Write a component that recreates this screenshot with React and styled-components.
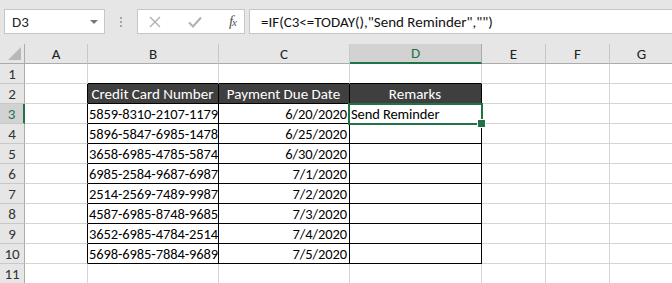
import { Fragment } from "react"
import styled, { createGlobalStyle } from "styled-components"

const GlobalStyle = createGlobalStyle`
	html, body {
		margin: 0;
		padding: 0;
		background: #ffffff;
		overflow: hidden;
	}
	* {
		box-sizing: border-box;
	}
`

const FONT = `Carlito, Lato, "Liberation Sans", sans-serif`
const GREEN = "#217346"
const GRID = "#d4d4d4"

const Window = styled.div`
	width: 672px;
	height: 283px;
	overflow: hidden;
	font-family: ${FONT};
	background: #ffffff;
`

const FormulaBar = styled.div`
	height: 44px;
	background: #e6e6e6;
	display: flex;
	align-items: flex-start;
	padding: 9px 0 0 4px;
`

const NameBox = styled.div`
	width: 101px;
	height: 25px;
	background: #ffffff;
	border: 1px solid #c6c6c6;
	display: flex;
	align-items: center;
	justify-content: space-between;
	padding: 0 6px 0 7px;
	font-size: 15px;
	color: #222;
`

const Caret = styled.span`
	width: 0;
	height: 0;
	border-left: 4px solid transparent;
	border-right: 4px solid transparent;
	border-top: 4px solid #777;
`

const Dots = styled.div`
	width: 32px;
	height: 25px;
	display: flex;
	flex-direction: column;
	align-items: center;
	justify-content: center;
	gap: 2px;
	span {
		width: 2px;
		height: 2px;
		background: #a6a6a6;
	}
`

const FxBox = styled.div`
	width: 108px;
	height: 25px;
	background: #ffffff;
	border: 1px solid #c6c6c6;
	display: flex;
	align-items: center;
	padding: 0 8px 0 11px;
	justify-content: space-between;
	color: #a0a0a0;
`

const Fx = styled.span`
	font-family: "Liberation Serif", serif;
	font-style: italic;
	font-size: 15px;
	color: #555;
	letter-spacing: -1px;
	span {
		font-size: 11px;
	}
`

const FormulaInput = styled.div`
	flex: 1;
	margin-left: 4px;
	height: 25px;
	background: #ffffff;
	border: 1px solid #c6c6c6;
	border-right: none;
	display: flex;
	align-items: center;
	padding-left: 11px;
	font-size: 15px;
	color: #111;
`

const Sheet = styled.div`
	display: grid;
	grid-template-columns: 25px 63px 131px 131px 132px 64px 64px 64px;
	grid-auto-rows: 20px;
`

const Corner = styled.div`
	background: #e6e6e6;
	border-right: 1px solid #ababab;
	border-bottom: 1px solid #ababab;
	position: relative;
	&::after {
		content: "";
		position: absolute;
		right: 3px;
		bottom: 3px;
		border-left: 13px solid transparent;
		border-bottom: 13px solid #b8b8b8;
	}
`

const ColHead = styled.div`
	background: ${(p) => (p.$active ? "#d2d2d2" : "#e6e6e6")};
	border-right: 1px solid ${(p) => (p.$active ? "#ababab" : "#c8c8c8")};
	border-bottom: ${(p) => (p.$active ? `2px solid ${GREEN}` : "1px solid #ababab")};
	color: ${(p) => (p.$active ? GREEN : "#222")};
	font-size: 15px;
	display: flex;
	align-items: center;
	justify-content: center;
`

const RowHead = styled.div`
	background: ${(p) => (p.$active ? "#d2d2d2" : "#e6e6e6")};
	border-right: ${(p) => (p.$active ? `2px solid ${GREEN}` : "1px solid #ababab")};
	border-bottom: 1px solid #c8c8c8;
	color: ${(p) => (p.$active ? GREEN : "#333")};
	font-size: 15px;
	display: flex;
	align-items: center;
	justify-content: center;
	padding-top: 1px;
`

const Cell = styled.div`
	position: relative;
	background: ${(p) => (p.$dark ? "#3f3f3f" : "#ffffff")};
	color: ${(p) => (p.$dark ? "#ffffff" : "#000000")};
	border-right: 1px solid ${(p) => p.$right};
	border-bottom: 1px solid ${(p) => p.$bottom};
	font-size: ${(p) => (p.$dark ? "15px" : "14.5px")};
	letter-spacing: ${(p) => (p.$dark ? "0" : "-0.1px")};
	display: flex;
	align-items: flex-end;
	justify-content: ${(p) => p.$align};
	padding: 0 2px 0 1px;
	white-space: nowrap;
`

const Selection = styled.div`
	position: absolute;
	z-index: 2;
	left: -2px;
	top: -1px;
	right: -2px;
	bottom: -2px;
	border: 2px solid ${GREEN};
	pointer-events: none;
	&::after {
		content: "";
		position: absolute;
		right: -5px;
		bottom: -5px;
		width: 7px;
		height: 7px;
		background: ${GREEN};
		border: 1px solid #ffffff;
	}
`

const columns = ["A", "B", "C", "D", "E", "F", "G"]

const data = [
	["5859-8310-2107-1179", "6/20/2020", "Send Reminder"],
	["5896-5847-6985-1478", "6/25/2020", ""],
	["3658-6985-4785-5874", "6/30/2020", ""],
	["6985-2584-9687-6987", "7/1/2020", ""],
	["2514-2569-7489-9987", "7/2/2020", ""],
	["4587-6985-8748-9685", "7/3/2020", ""],
	["3652-6985-4784-2514", "7/4/2020", ""],
	["5698-6985-7884-9689", "7/5/2020", ""],
]

function cellValue(r, c) {
	if (r === 2) return ["", "Credit Card Number", "Payment Due Date", "Remarks"][c] || ""
	if (r >= 3 && r <= 10 && c >= 1 && c <= 3) return data[r - 3][c - 1]
	return ""
}

function App() {
	const rows = Array.from({ length: 11 }, (_, i) => i + 1)
	return (
		<Window>
			<GlobalStyle />
			<FormulaBar>
				<NameBox>
					D3
					<Caret />
				</NameBox>
				<Dots>
					<span />
					<span />
					<span />
				</Dots>
				<FxBox>
					<svg width="12" height="12" viewBox="0 0 12 12">
						<path d="M1 1 L11 11 M11 1 L1 11" stroke="#b0b0b0" strokeWidth="1.4" fill="none" />
					</svg>
					<svg width="14" height="12" viewBox="0 0 14 12">
						<path d="M1 6.5 L5 10.5 L13 1.5" stroke="#b0b0b0" strokeWidth="2" fill="none" />
					</svg>
					<Fx>
						f<span>x</span>
					</Fx>
				</FxBox>
				<FormulaInput>=IF(C3&lt;=TODAY(),"Send Reminder","")</FormulaInput>
			</FormulaBar>
			<Sheet>
				<Corner />
				{columns.map((col) => (
					<ColHead key={col} $active={col === "D"}>
						{col}
					</ColHead>
				))}
				{rows.map((r) => (
					<Fragment key={r}>
						<RowHead $active={r === 3}>{r}</RowHead>
						{columns.map((col, c) => {
							const inTable = r >= 2 && r <= 10
							const right = inTable && c <= 3 ? "#000000" : GRID
							const bottom =
								(inTable || r === 1) && c >= 1 && c <= 3 ? "#000000" : GRID
							const align =
								r === 2 ? "center" : c === 2 ? "flex-end" : "flex-start"
							return (
								<Cell
									key={col}
									$dark={r === 2 && c >= 1 && c <= 3}
									$right={right}
									$bottom={bottom}
									$align={align}
								>
									{cellValue(r, c)}
									{r === 3 && col === "D" && <Selection />}
								</Cell>
							)
						})}
					</Fragment>
				))}
			</Sheet>
		</Window>
	)
}

export default App
